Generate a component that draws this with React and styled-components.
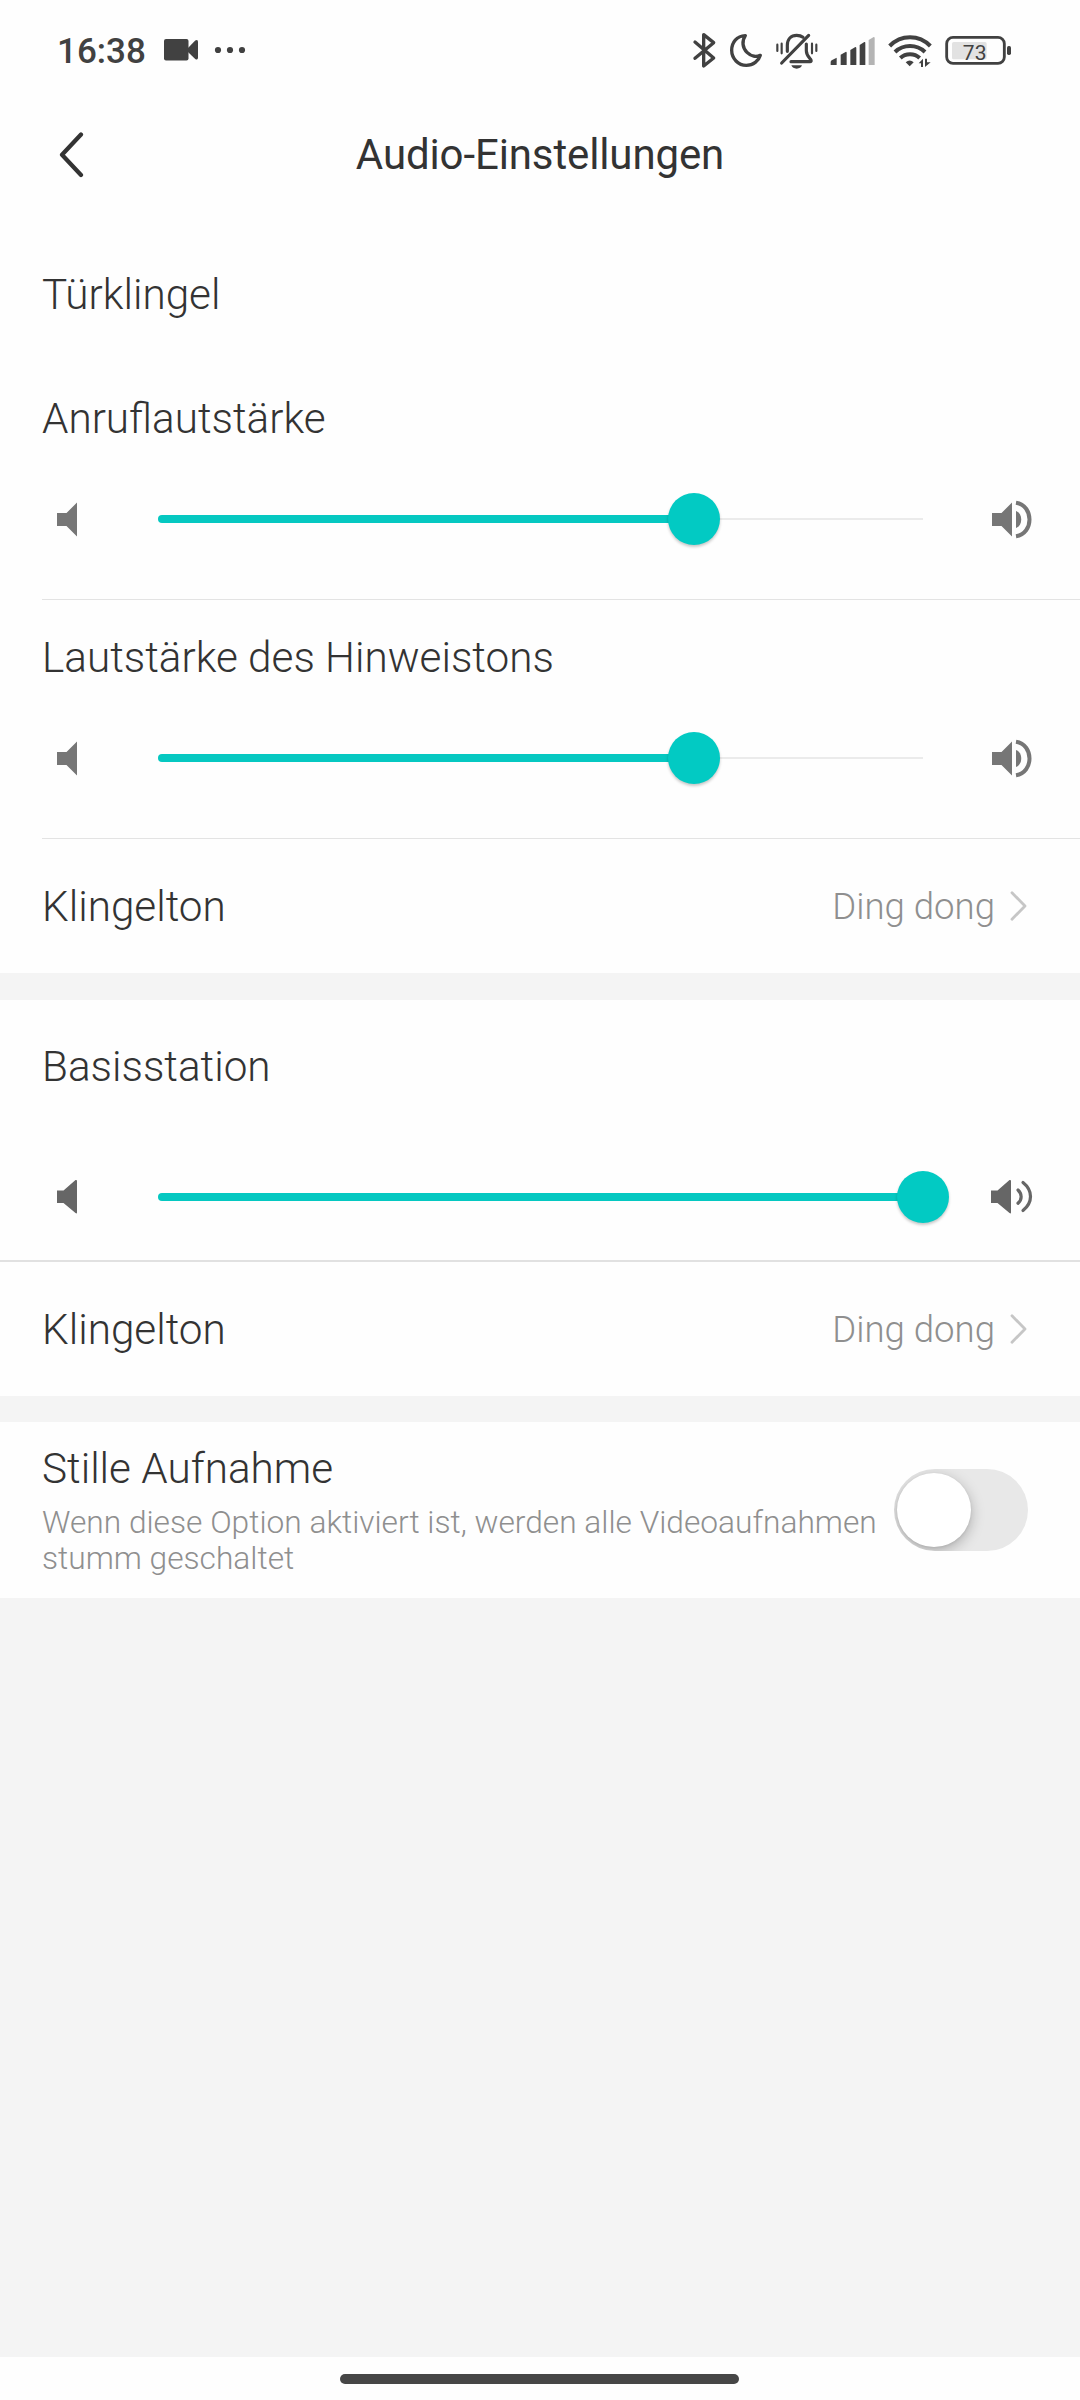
import React from "react";
import styled, { createGlobalStyle } from "styled-components";

const Global = createGlobalStyle`
  * { box-sizing: border-box; }
  body { margin: 0; background: #f4f4f4; font-family: Roboto, "Noto Sans", sans-serif; }
`;

const Screen = styled.div`
  width: 1080px;
  height: 2400px;
  display: flex;
  flex-direction: column;
  background: #f4f4f4;
  color: #333;
  overflow: hidden;
`;

const StatusBar = styled.div`
  height: 100px;
  flex: none;
  padding: 0 67px 0 57px;
  display: flex;
  align-items: center;
  justify-content: space-between;
  background: #fefefe;
`;

const StatusGroup = styled.div`
  display: flex;
  align-items: center;
  gap: ${(p) => p.$gap || 0}px;
  svg { display: block; flex: none; }
`;

const Clock = styled.span`
  width: 107px;
  font-size: 35px;
  font-weight: 500;
  line-height: 40px;
  padding-top: 4px;
  color: #414141;
`;

const Header = styled.header`
  height: 109px;
  flex: none;
  display: grid;
  grid-template-columns: 120px 1fr 120px;
  align-items: center;
  background: #fefefe;
`;

const BackButton = styled.button`
  border: 0;
  padding: 0 0 0 58px;
  background: none;
  svg { display: block; }
`;

const Title = styled.h1`
  margin: 0;
  text-align: center;
  font-size: 42px;
  font-weight: 400;
  line-height: 50px;
  letter-spacing: -0.12px;
`;

const Card = styled.section`
  flex: none;
  background: #fefefe;
  margin-bottom: ${(p) => p.$gap || 0}px;
`;

const Label = styled.div`
  height: ${(p) => p.$height}px;
  padding-top: ${(p) => p.$top || 0}px;
  padding-left: 42px;
  display: flex;
  align-items: center;
  font-size: 42.25px;
  font-weight: 300;
  line-height: 50px;
`;

const VolumeGroup = styled.div`
  padding: 20px 0 17px;
`;

const Rule = styled.div`
  height: ${(p) => (p.$full ? 2 : 1)}px;
  margin-left: ${(p) => (p.$full ? 0 : 42)}px;
  background: ${(p) => (p.$full ? "#e1e1e1" : "#e3e3e3")};
`;

const SliderRow = styled.div`
  height: 126px;
  padding-left: 57px;
  display: flex;
  align-items: center;
  svg { display: block; flex: none; }
`;

const Track = styled.div`
  position: relative;
  width: 765px;
  height: 52px;
  margin: 0 68px 0 81px;
  display: flex;
  align-items: center;
  background: linear-gradient(#ebebeb, #ebebeb) center / 100% 2px no-repeat;
`;

const Fill = styled.div`
  height: 8px;
  border-radius: 4px;
  background: #05c8c1;
`;

const Thumb = styled.div`
  position: absolute;
  top: 0;
  width: 52px;
  height: 52px;
  margin-left: -26px;
  border-radius: 50%;
  background: #02cac3;
  box-shadow: 0 2px 3px rgba(0, 0, 0, 0.22);
`;

const Row = styled.div`
  height: 134px;
  padding-right: 53px;
  display: flex;
  align-items: center;
  justify-content: space-between;
`;

const Value = styled.div`
  display: flex;
  align-items: center;
  gap: 15px;
  font-size: 36.6px;
  font-weight: 300;
  line-height: 42px;
  color: #8f8f8f;
  span { padding-top: 2px; }
  svg { display: block; }
`;

const ToggleRow = styled.div`
  height: 176px;
  padding: 0 52.5px 0 42px;
  display: flex;
  align-items: center;
  justify-content: space-between;
`;

const ToggleText = styled.div`
  width: 845px;
  display: flex;
  flex-direction: column;
  gap: 11px;
`;

const ToggleTitle = styled.div`
  font-size: 42.25px;
  font-weight: 300;
  line-height: 50px;
`;

const Hint = styled.div`
  font-size: 31.7px;
  font-weight: 300;
  line-height: 36px;
  color: #8f8f8f;
`;

const Switch = styled.div`
  width: 134px;
  height: 82px;
  flex: none;
  padding: 4px 3.5px;
  border-radius: 41px;
  background: #e8e8e8;
  overflow: hidden;
`;

const Knob = styled.div`
  width: 74px;
  height: 74px;
  border-radius: 50%;
  background: #fff;
  box-shadow: 0 4px 14px rgba(0, 0, 0, 0.26), 0 1px 3px rgba(0, 0, 0, 0.08);
`;

const Spacer = styled.div`
  flex: 1;
`;

const NavBar = styled.div`
  height: 43px;
  flex: none;
  display: flex;
  justify-content: center;
  padding: 17px 1px 0 0;
  background: #fefefe;
`;

const HomePill = styled.div`
  width: 399px;
  height: 10px;
  border-radius: 5px;
  background: #464646;
`;

const ink = "#414141";

const CameraIcon = () => (
  <svg width="34" height="22" viewBox="0 0 34 22" fill={ink}>
    <rect x="0" y="0" width="24.5" height="21.5" rx="2" />
    <path d="M24 9 31.2 1.6Q34 0 34 3V18.5Q34 21.5 31.2 20L24 13Z" />
  </svg>
);

const DotsIcon = () => (
  <svg width="32" height="8" viewBox="0 0 32 8" fill={ink}>
    <circle cx="4" cy="4" r="3.1" />
    <circle cx="16" cy="4" r="3.1" />
    <circle cx="28" cy="4" r="3.1" />
  </svg>
);

const BluetoothIcon = () => (
  <svg width="25" height="40" viewBox="36 30 75 120" fill="none" stroke={ink} strokeWidth="10" strokeLinecap="round" strokeLinejoin="round">
    <path d="M45 66 101 114 71 138V44L101 68 45 115" />
  </svg>
);

const MoonIcon = () => (
  <svg width="35" height="40" viewBox="146 30 105 120" fill="none" stroke={ink} strokeWidth="10" strokeLinejoin="round">
    <path d="M198 47C172 48 157 67 157 91C157 116 177 136 201 136C222 136 238 123 243 106C231 112 215 109 203 97C189 83 187 63 198 47Z" />
  </svg>
);

const BellOffIcon = () => (
  <svg width="44" height="40" viewBox="286 30 132 120" fill="none" stroke={ink} strokeWidth="9.5" strokeLinecap="round" strokeLinejoin="round">
    <path d="M326 94V76C326 58 337 46 354 46C362 46 368 48 373 52" />
    <path d="M383 72V92C383 105 390 111 397 120Q399 125 394 125H337" />
    <path d="M309 129 390 46" />
    <path d="M338 136H370Q366 146 354 146Q342 146 338 136Z" fill={ink} stroke="none" />
    <path d="M296 74V93M309 71V100M400 71V100M413 74V93" strokeWidth="6.5" />
  </svg>
);

const SignalIcon = () => (
  <svg width="46" height="40" viewBox="451 30 138 120" fill={ink}>
    <path d="M456 135V126Q456 123 459 121L474 113V135Z" />
    <path d="M486 135V104L502 95Q504 95 504 98V135Z" />
    <path d="M515 135V90L530 81Q533 81 533 84V135Z" />
    <path d="M543 135V75L557 66Q560 65 560 69V135Z" />
    <path d="M570 135V60L585 51Q588 51 588 54V135Z" fill="#b4b4b4" />
  </svg>
);

const WifiIcon = () => (
  <svg width="46" height="40" viewBox="621 30 138 120" fill="none" stroke={ink} strokeWidth="12">
    <path d="M629 78C663 43 717 43 751 78" />
    <path d="M645 96C670 72 710 72 735 96" />
    <path d="M661 114C677 99 703 99 719 114" />
    <path d="M677 127Q689 116 701 127L689 139Z" fill={ink} stroke="none" />
    <path d="M716 130 729 116V141H723V130ZM735 116H741V127H752L735 141Z" fill={ink} stroke="none" />
  </svg>
);

const BatteryIcon = () => (
  <svg width="69" height="40" viewBox="792 30 207 120">
    <rect x="816" y="66" width="104" height="52" rx="5" fill="#e2e2e2" />
    <rect x="800" y="52" width="173" height="78" rx="19" fill="none" stroke={ink} strokeWidth="8.5" />
    <rect x="981" y="78" width="12" height="27" rx="5" fill={ink} />
    <text x="884" y="119.5" textAnchor="middle" fontFamily="Roboto, sans-serif" fontSize="63" fontWeight="400" fill={ink}>73</text>
  </svg>
);

const BackIcon = () => (
  <svg width="28" height="46" viewBox="0 0 28 46" fill="none" stroke="#333" strokeWidth="4.2" strokeLinecap="round" strokeLinejoin="round">
    <path d="M23 2.5 4 22.8 23 43" />
  </svg>
);

const ChevronIcon = () => (
  <svg width="17" height="30" viewBox="0 0 17 30" fill="none" stroke="#c6c6c6" strokeWidth="2.8" strokeLinecap="round" strokeLinejoin="round">
    <path d="M2 1.8 15 15 2 28.2" />
  </svg>
);

const LowIcon = ({ round }) =>
  round ? (
    <svg width="20" height="40" viewBox="0 0 20 40" fill="#666">
      <path d="M0 13.5H6.5L18.5 3Q20 2.5 20 4V35.5Q20 37 18.5 36L6.5 26H0Z" />
    </svg>
  ) : (
    <svg width="20" height="40" viewBox="0 0 20 40" fill="#767676">
      <path d="M0 14H9.5L20 3.5V37.5L9.5 27H0Z" />
    </svg>
  );

const LoudIcon = ({ round }) =>
  round ? (
    <svg width="42" height="40" viewBox="0 0 42 40" fill="none" stroke="#666" strokeLinecap="round">
      <path d="M0 13.5H6.5L18.5 3Q20 2.5 20 4V35.5Q20 37 18.5 36L6.5 26H0Z" fill="#666" stroke="none" />
      <path d="M27 13C31.2 17 31.2 22.5 27 26.3" strokeWidth="3.2" />
      <path d="M32 5.5C42 13.5 42 25.5 32 33.5" strokeWidth="3.2" />
    </svg>
  ) : (
    <svg width="42" height="40" viewBox="0 0 42 40" fill="#767676">
      <path d="M1 14H10.5L21 3.5V37.5L10.5 27H1Z" />
      <path d="M25 12C32 14.5 32 26.5 25 29Z" />
      <path d="M25 3.7C43 6.5 43 34.5 25 37.3" fill="none" stroke="#767676" strokeWidth="4" />
    </svg>
  );

function Slider({ value, round }) {
  return (
    <SliderRow>
      <LowIcon round={round} />
      <Track>
        <Fill style={{ width: `${value}%` }} />
        <Thumb style={{ left: `${value}%` }} />
      </Track>
      <LoudIcon round={round} />
    </SliderRow>
  );
}

function RingtoneRow({ value }) {
  return (
    <Row>
      <Label $height={134} $top={1}>Klingelton</Label>
      <Value>
        <span>{value}</span>
        <ChevronIcon />
      </Value>
    </Row>
  );
}

export default function App() {
  return (
    <Screen>
      <Global />
      <StatusBar>
        <StatusGroup>
          <Clock>16:38</Clock>
          <StatusGroup $gap={16}>
            <CameraIcon />
            <DotsIcon />
          </StatusGroup>
        </StatusGroup>
        <StatusGroup $gap={11.3}>
          <BluetoothIcon />
          <MoonIcon />
          <BellOffIcon />
          <SignalIcon />
          <WifiIcon />
          <BatteryIcon />
        </StatusGroup>
      </StatusBar>
      <Header>
        <BackButton aria-label="Zurück">
          <BackIcon />
        </BackButton>
        <Title>Audio-Einstellungen</Title>
      </Header>

      <Card $gap={27}>
        <Label $height={152} $top={20}>Türklingel</Label>
        <VolumeGroup>
          <Label $height={75}>Anruflautstärke</Label>
          <Slider value={70} />
        </VolumeGroup>
        <Rule />
        <VolumeGroup>
          <Label $height={75}>Lautstärke des Hinweistons</Label>
          <Slider value={70} />
        </VolumeGroup>
        <Rule />
        <RingtoneRow value="Ding dong" />
      </Card>

      <Card $gap={26}>
        <Label $height={134}>Basisstation</Label>
        <Slider value={100} round />
        <Rule $full />
        <RingtoneRow value="Ding dong" />
      </Card>

      <Card>
        <ToggleRow>
          <ToggleText>
            <ToggleTitle>Stille Aufnahme</ToggleTitle>
            <Hint>Wenn diese Option aktiviert ist, werden alle Videoaufnahmen stumm geschaltet</Hint>
          </ToggleText>
          <Switch role="switch" aria-checked="false">
            <Knob />
          </Switch>
        </ToggleRow>
      </Card>

      <Spacer />
      <NavBar>
        <HomePill />
      </NavBar>
    </Screen>
  );
}
